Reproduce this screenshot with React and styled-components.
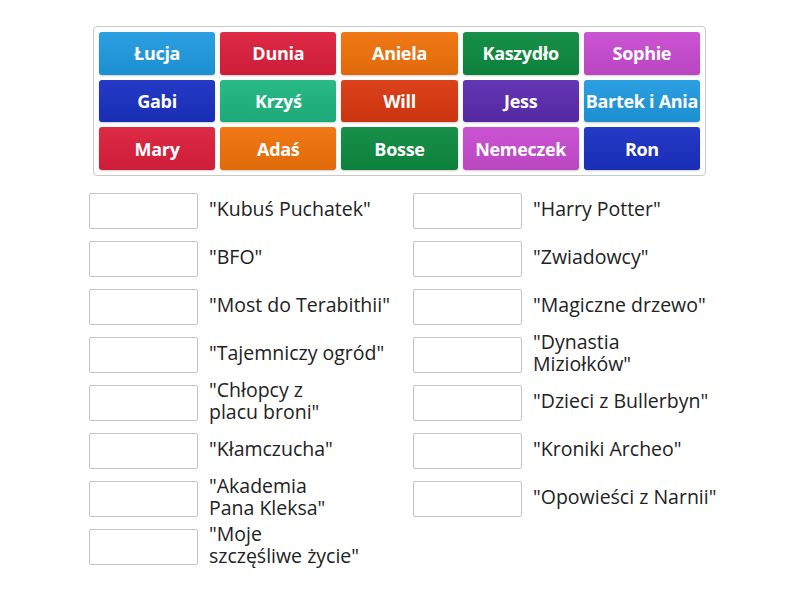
import styled, { createGlobalStyle } from 'styled-components';

const GlobalStyle = createGlobalStyle`
  body {
    margin: 0;
    background: #ffffff;
    font-family: 'Open Sans', 'Liberation Sans', sans-serif;
  }
`;

const Page = styled('div')`
  width: 800px;
  height: 600px;
  padding-top: 26px;
  box-sizing: border-box;
`;

const Bank = styled('div')`
  margin-left: 93px;
  width: 613px;
  height: 150px;
  box-sizing: border-box;
  padding: 5px;
  border: 1px solid #c9c9c9;
  border-radius: 4px;
  display: grid;
  grid-template-columns: repeat(5, 1fr);
  grid-template-rows: repeat(3, 1fr);
  gap: 5px;
`;

const Tile = styled('div')`
  display: flex;
  align-items: center;
  justify-content: center;
  border-radius: 3px;
  background-color: ${(props) => props.bg};
  background-image: linear-gradient(rgba(255, 255, 255, 0.05), rgba(0, 0, 0, 0.07));
  box-shadow: 0 1px 2px rgba(0, 0, 0, 0.2);
  color: #ffffff;
  font-weight: 700;
  font-size: 18px;
  white-space: nowrap;
  letter-spacing: -0.3px;
`;

const Targets = styled('div')`
  margin: 17px 0 0 89px;
  display: grid;
  grid-template-columns: 324px 324px;
  grid-auto-flow: column;
  grid-template-rows: repeat(8, 36px);
  row-gap: 12px;
`;

const Row = styled('div')`
  display: flex;
  align-items: center;
  gap: 11px;
`;

const Slot = styled('div')`
  flex: none;
  width: 109px;
  height: 36px;
  box-sizing: border-box;
  border: 1px solid #c4c4c4;
  border-radius: 2px;
  background: #ffffff;
`;

const Label = styled('div')`
  font-size: 19.5px;
  line-height: 22px;
  color: #222222;
  white-space: nowrap;
  margin-top: -5px;
`;

const tiles = [
  ['Łucja', '#1f9ae0'],
  ['Dunia', '#dc1f3c'],
  ['Aniela', '#f0720a'],
  ['Kaszydło', '#0c8a3f'],
  ['Sophie', '#c84bd0'],
  ['Gabi', '#1a30c2'],
  ['Krzyś', '#1db680'],
  ['Will', '#d9380f'],
  ['Jess', '#5b2baf'],
  ['Bartek i Ania', '#1f9ae0'],
  ['Mary', '#dc1f3c'],
  ['Adaś', '#f0720a'],
  ['Bosse', '#0c8a3f'],
  ['Nemeczek', '#c84bd0'],
  ['Ron', '#1a30c2'],
];

const left = [
  ['"Kubuś Puchatek"'],
  ['"BFO"'],
  ['"Most do Terabithii"'],
  ['"Tajemniczy ogród"'],
  ['"Chłopcy z', 'placu broni"'],
  ['"Kłamczucha"'],
  ['"Akademia', 'Pana Kleksa"'],
  ['"Moje', 'szczęśliwe życie"'],
];

const right = [
  ['"Harry Potter"'],
  ['"Zwiadowcy"'],
  ['"Magiczne drzewo"'],
  ['"Dynastia', 'Miziołków"'],
  ['"Dzieci z Bullerbyn"'],
  ['"Kroniki Archeo"'],
  ['"Opowieści z Narnii"'],
];

const renderRow = (lines, i) => (
  <Row key={lines[0] + i}>
    <Slot />
    <Label>
      {lines.map((l, j) => (
        <div key={j}>{l}</div>
      ))}
    </Label>
  </Row>
);

export default function App() {
  return (
    <Page>
      <GlobalStyle />
      <Bank>
        {tiles.map(([name, bg]) => (
          <Tile key={name} bg={bg}>
            {name}
          </Tile>
        ))}
      </Bank>
      <Targets>
        {left.map(renderRow)}
        {right.map(renderRow)}
      </Targets>
    </Page>
  );
}
